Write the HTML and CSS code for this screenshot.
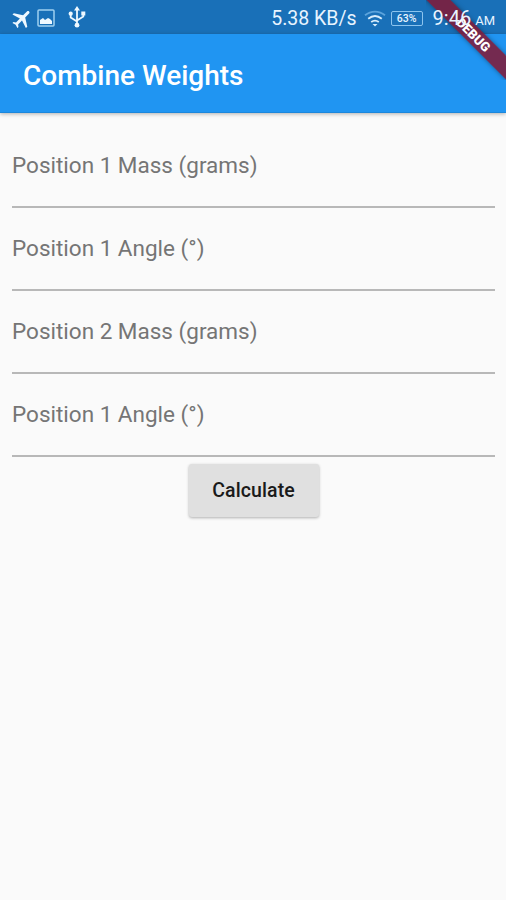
FILE: index.html
```html
<!DOCTYPE html>
<html lang="en">
<head>
    <meta charset="UTF-8">
    <meta name="viewport" content="width=device-width, initial-scale=1.0">
    <title>Combine Weights</title>
    <link rel="stylesheet" href="styles.css">
</head>
<body>
    <div class="status-bar">
        <div class="status-left">
            <svg class="icon-plane" width="20" height="20" viewBox="1.500 1.500 20 20">
                <path transform="rotate(45 11.5 12)" d="M21 16v-2l-8-5V3.500c0-.83-.67-1.500-1.500-1.500S10 2.670 10 3.500V9l-8 5v2l8-2.500V19l-2 1.500V22l3.500-1 3.500 1v-1.500L13 19v-5.500l8 2.500z"/>
            </svg>
            <svg class="icon-image" width="18" height="18" viewBox="0 0 18 18">
                <rect x="1" y="1" width="16" height="16" rx="1"/>
                <path d="M3 15v-4l3-2 2 2 3-2 2 1 2 2v3z"/>
            </svg>
            <svg class="icon-usb" width="18" height="22" viewBox="0 0 18 22">
                <path class="usb-lines" d="M9 3v16M2.700 8v3.500L9 15.500M15.300 8v2.500L9 14.500"/>
                <path d="M9 0l3 4.500H6zM13.300 5.500h4v4h-4z"/>
                <circle cx="2.700" cy="7.700" r="2.100"/>
                <circle cx="9" cy="19.200" r="2.400"/>
            </svg>
        </div>
        <div class="status-right">
            <span class="speed">5.38 KB/s</span>
            <svg class="icon-wifi" width="22" height="17" viewBox="0 0 22 17">
                <path class="wifi-faint" d="M1 5.300c6-5 14-5 20 0"/>
                <path d="M4.200 8.800c4.200-3.400 9.400-3.400 13.600 0M7.200 12c2.400-1.800 5.200-1.800 7.600 0"/>
                <path class="wifi-dot" d="M8.500 14h5L11 16.500z"/>
            </svg>
            <span class="battery">63%</span>
            <span class="time">9:46</span>
            <span class="period">AM</span>
        </div>
    </div>

    <header class="app-bar">
        <h1>Combine Weights</h1>
    </header>

    <main class="form">
        <div class="field">Position 1 Mass (grams)</div>
        <div class="field">Position 1 Angle (°)</div>
        <div class="field">Position 2 Mass (grams)</div>
        <div class="field">Position 1 Angle (°)</div>
        <button class="calculate" type="button">Calculate</button>
    </main>

    <div class="debug-banner"><span>DEBUG</span></div>
</body>
</html>
```
FILE: styles.css
```css
* {
    box-sizing: border-box;
}

body {
    margin: 0;
    min-height: 100vh;
    position: relative;
    overflow: hidden;
    background: #fafafa;
    font-family: Roboto, sans-serif;
}

.status-bar {
    display: flex;
    justify-content: space-between;
    height: 34px;
    padding: 0 11px 0 12px;
    background: #1970b8;
    color: #e8f4ff;
}

.status-left,
.status-right {
    display: flex;
    align-items: center;
    height: 36px;
}

/* system icons and clock stay above the ribbon */
.status-right {
    position: relative;
    z-index: 2;
}

.status-left svg {
    fill: #eef8ff;
}

.icon-image {
    margin-left: 5px;
}

.icon-image rect {
    fill: none;
    stroke: #9fd0f0;
    stroke-width: 1.5;
}

.icon-usb {
    margin-left: 13px;
    margin-top: -2px;
}

.icon-usb .usb-lines {
    fill: none;
    stroke: #eef8ff;
    stroke-width: 1.8;
}

.speed {
    font-size: 19.5px;
}

.icon-wifi {
    margin-left: 7px;
    fill: none;
    stroke: #d8edfc;
    stroke-width: 1.8;
}

.icon-wifi .wifi-faint {
    stroke: #5ba3dc;
}

.icon-wifi .wifi-dot {
    fill: #d8edfc;
    stroke: none;
}

.battery {
    width: 32px;
    height: 15px;
    margin-left: 5px;
    border: 1px solid #8cc4ee;
    border-radius: 2px;
    font-size: 10.5px;
    font-weight: 500;
    line-height: 14px;
    text-align: center;
}

.time {
    margin-left: 10px;
    font-size: 20px;
}

.period {
    margin-left: 4px;
    padding-top: 4px;
    font-size: 13px;
}

.app-bar {
    display: flex;
    align-items: center;
    height: 79px;
    padding: 5px 23px 0;
    background: #2095f2;
    border-bottom: 1px solid #1c87dc;
    box-shadow: 0 1px 4px rgba(0, 0, 0, 0.3);
}

.app-bar h1 {
    margin: 0;
    color: #fff;
    font-size: 28px;
    font-weight: 500;
}

.form {
    display: flex;
    flex-direction: column;
    padding: 12px 11px 0 12px;
}

.field {
    height: 83px;
    padding-top: 26px;
    border-bottom: 2px solid #b8b8b8;
    color: #757575;
    font-size: 22.5px;
    line-height: 28px;
}

.calculate {
    align-self: center;
    width: 130px;
    height: 53px;
    margin-top: 7px;
    padding: 0 0 1px;
    border: 0;
    border-radius: 3px;
    background: #e0e0e0;
    box-shadow: 0 1px 3px rgba(0, 0, 0, 0.3);
    color: #1a1a1a;
    font-family: inherit;
    font-size: 19.5px;
    font-weight: 500;
    letter-spacing: 0.1px;
}

/* diagonal ribbon over the top right corner */
.debug-banner {
    position: absolute;
    top: 0;
    right: 0;
    width: 80px;
    height: 80px;
    overflow: hidden;
}

.debug-banner span {
    position: absolute;
    top: 25px;
    left: -24px;
    width: 140px;
    height: 17px;
    padding-left: 4px;
    transform: rotate(45deg);
    background: rgba(132, 24, 52, 0.85);
    box-shadow: 0 0 5px rgba(0, 0, 0, 0.4);
    color: #fff;
    font-size: 13px;
    font-weight: 900;
    line-height: 17px;
    text-align: center;
}
```
